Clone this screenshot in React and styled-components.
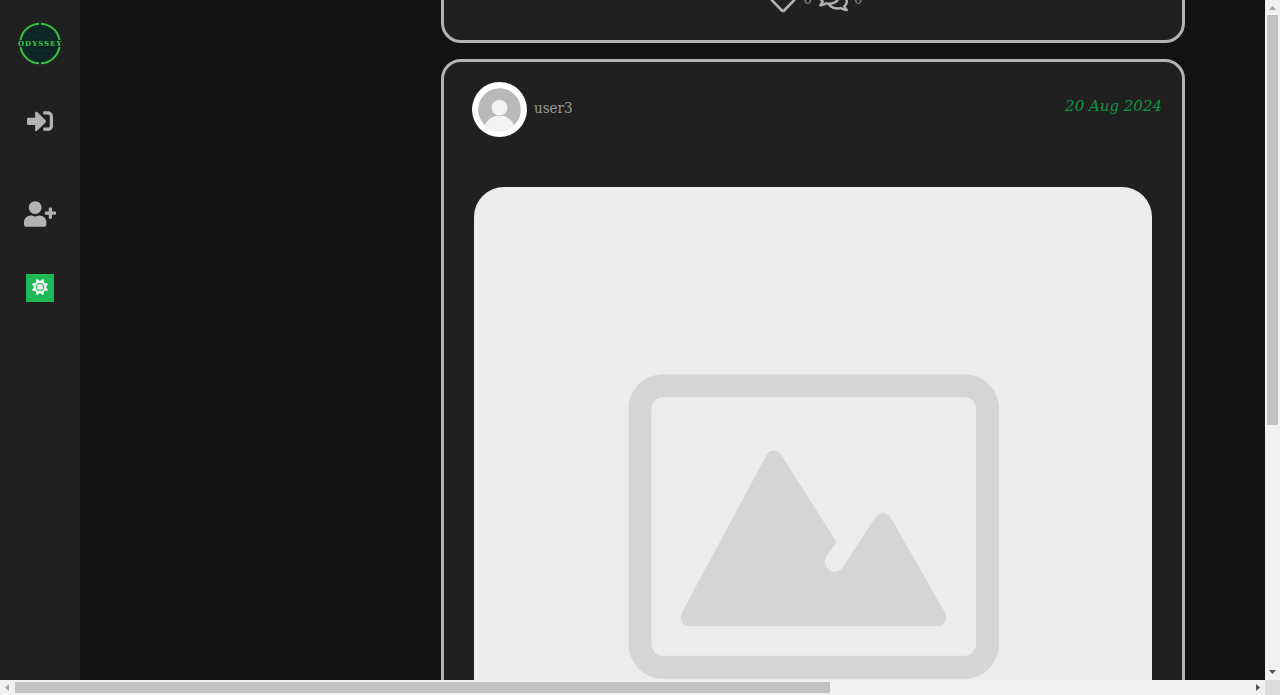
import React from "react";
import styled, { createGlobalStyle } from "styled-components";
import {
  FaSignInAlt,
  FaUserPlus,
  FaRegHeart,
  FaRegComments,
} from "react-icons/fa";
import { FaSun } from "react-icons/fa6";

const GlobalStyle = createGlobalStyle`
  * { box-sizing: border-box; }
  body {
    margin: 0;
    background: #121212;
    color: #b3b3b3;
    font-family: "DejaVu Serif Condensed", "DejaVu Serif", serif;
    font-size: 15px;
    line-height: 20px;
  }
`;

const Window = styled.div`
  display: grid;
  grid-template: minmax(0, 1fr) 15px / minmax(0, 1fr) 15px;
  height: 100vh;
`;

const Page = styled.div`
  display: flex;
  overflow: hidden;
`;

const Sidebar = styled.nav`
  flex: 0 0 80px;
  display: flex;
  flex-direction: column;
  align-items: center;
  padding-top: 20px;
  background: #202020;
`;

const HomeLink = styled.a`
  display: block;
  height: 47px;
  margin-bottom: 7px;
`;

const NavLink = styled.a`
  display: flex;
  align-items: center;
  justify-content: center;
  width: 100%;
  height: 93px;
  color: #b3b3b3;

  svg {
    width: 32px;
    height: 26px;
  }
`;

const ThemeToggle = styled.button`
  display: flex;
  justify-content: center;
  width: 28px;
  height: 28px;
  margin-top: 14px;
  padding: 5px 0 0;
  border: 0;
  background: #1db954;
  color: #f1f1f1;
  font-size: 16px;
`;

const Feed = styled.main`
  flex: 1;
  display: flex;
  flex-direction: column;
  align-items: flex-end;
  gap: 16px;
  margin-top: -63px;
  padding: 0 80px 16px 16px;
`;

const Card = styled.article`
  flex: none;
  width: 100%;
  max-width: 744px;
  border: 3px solid #b3b3b3;
  border-radius: 20px;
  background: #202020;
`;

const Actions = styled.div`
  display: flex;
  align-items: center;
  justify-content: center;
  gap: 7px;
  padding: 46px 0 26px 6px;
`;

const Action = styled.button`
  display: flex;
  align-items: center;
  gap: 6px;
  height: 28px;
  padding: 0;
  border: 0;
  background: none;
  color: #b3b3b3;
  font: inherit;

  svg {
    width: ${(p) => (p.$wide ? "29px" : "28px")};
    height: 28px;
  }
`;

const Count = styled.span`
  padding-bottom: 2px;
  color: #8c8c8c;
`;

const PostHeader = styled.header`
  display: flex;
  align-items: center;
  gap: 7px;
  padding: 20px 20px 50px 28px;
`;

const UserName = styled.a`
  padding-bottom: 4px;
  color: #999;
  text-decoration: none;
`;

const PostDate = styled.time`
  align-self: flex-start;
  margin: 14px 0 0 auto;
  color: #0f9743;
  font-family: "DejaVu Serif", serif;
  font-style: italic;
`;

const Picture = styled.figure`
  margin: 0 30px 30px;
  overflow: hidden;
  border-radius: 30px;
  background: #ececec;

  svg {
    display: block;
    width: 100%;
    height: auto;
  }
`;

const ScrollBar = styled.div`
  display: flex;
  flex-direction: ${(p) => (p.$vertical ? "column" : "row")};
  background: #f1f1f1;
`;

const ScrollArrow = styled.svg`
  flex: none;
  width: 15px;
  height: 15px;
  fill: ${(p) => (p.$active ? "#505050" : "#a3a3a3")};
`;

const ScrollTrack = styled.div`
  flex: 1;
  display: flex;
  flex-direction: ${(p) => (p.$vertical ? "column" : "row")};
  padding: ${(p) => (p.$vertical ? "0 2px" : "2px 0")};
`;

const ScrollThumb = styled.div`
  flex: 0 0 ${(p) => p.$size};
  background: #c1c1c1;
`;

const ScrollCorner = styled.div`
  background: #dcdcdc;
`;

const LogoText = styled.text`
  fill: #3ccb48;
  font-family: "DejaVu Serif", serif;
  font-size: 7px;
  font-weight: bold;
  letter-spacing: 1px;
`;

function Logo() {
  return (
    <svg width="48" height="47" viewBox="0 0 48 47" role="img" aria-label="Odyssey">
      <circle cx="24" cy="23.5" r="19" fill="#0d2525" />
      <path d="M12 18l6-4 4 3 5-5 4 5 5 2M13 29l8 2 7-1 7 2" fill="none" stroke="#122f2a" />
      <g fill="none" stroke="#36bd42" strokeWidth="2">
        <path d="M4.500 20A19.800 19.800 0 0 1 23 3.700M25 3.700A19.800 19.800 0 0 1 43.500 20" />
        <path d="M4.500 27A19.800 19.800 0 0 0 23 43.300M25 43.300A19.800 19.800 0 0 0 43.500 27" />
      </g>
      <LogoText x="2" y="26">ODYSSEY</LogoText>
    </svg>
  );
}

function Avatar() {
  return (
    <svg width="55" height="55" viewBox="0 0 55 55" role="img" aria-label="Profile picture">
      <defs>
        <clipPath id="avatar-disc">
          <circle cx="27.5" cy="27.5" r="21.3" />
        </clipPath>
      </defs>
      <circle cx="27.5" cy="27.5" r="27.5" fill="#fff" />
      <g clipPath="url(#avatar-disc)">
        <rect width="55" height="55" fill="#b9b9b9" />
        <ellipse cx="27.5" cy="47" rx="15" ry="13.5" fill="#f3f3f3" />
        <circle cx="27.5" cy="25.7" r="8.7" fill="#b9b9b9" />
        <circle cx="27.5" cy="25.7" r="7.9" fill="#f3f3f3" />
      </g>
    </svg>
  );
}

function PlaceholderImage() {
  return (
    <svg viewBox="0 0 678 678" role="img" aria-label="Placeholder">
      <rect x="166" y="198.7" width="347.5" height="281.6" rx="23" fill="none" stroke="#d5d5d5" strokeWidth="23" />
      <path
        fill="#d5d5d5"
        d="M292 269C295 261.500 304.500 261.500 308 269L361.300 353Q362.500 355 361.300 357L353 368.500C346 378 359 392 368.700 380.500L401 331C405 324.500 413 324.500 417 331L470 424Q472 428 472 431.500Q471 438 465 439H214.500Q208 438.500 207 431.500Q207 428 209 423.500Z"
      />
    </svg>
  );
}

const ARROWS = {
  up: "M4 10h7L7.500 6z",
  down: "M4 5h7L7.500 9z",
  left: "M9 4v7L5 7.500z",
  right: "M6 4v7l4-3.500z",
};

function Arrow({ direction, active }) {
  return (
    <ScrollArrow viewBox="0 0 15 15" $active={active} aria-hidden="true">
      <path d={ARROWS[direction]} />
    </ScrollArrow>
  );
}

export default function App() {
  return (
    <>
      <GlobalStyle />
      <Window>
        <Page>
          <Sidebar>
            <HomeLink href="#home">
              <Logo />
            </HomeLink>
            <NavLink href="#signin" aria-label="Sign in">
              <FaSignInAlt />
            </NavLink>
            <NavLink href="#signup" aria-label="Sign up">
              <FaUserPlus />
            </NavLink>
            <ThemeToggle type="button" aria-label="Toggle theme">
              <FaSun />
            </ThemeToggle>
          </Sidebar>
          <Feed>
            <Card>
              <Actions>
                <Action type="button" aria-label="Likes">
                  <FaRegHeart />
                  <Count>0</Count>
                </Action>
                <Action type="button" aria-label="Comments" $wide>
                  <FaRegComments />
                  <Count>0</Count>
                </Action>
              </Actions>
            </Card>
            <Card>
              <PostHeader>
                <Avatar />
                <UserName href="#user3">user3</UserName>
                <PostDate dateTime="2024-08-20">20 Aug 2024</PostDate>
              </PostHeader>
              <Picture>
                <PlaceholderImage />
              </Picture>
            </Card>
          </Feed>
        </Page>
        <ScrollBar $vertical>
          <Arrow direction="up" />
          <ScrollTrack $vertical>
            <ScrollThumb $size="63%" />
          </ScrollTrack>
          <Arrow direction="down" active />
        </ScrollBar>
        <ScrollBar>
          <Arrow direction="left" />
          <ScrollTrack>
            <ScrollThumb $size="66%" />
          </ScrollTrack>
          <Arrow direction="right" active />
        </ScrollBar>
        <ScrollCorner />
      </Window>
    </>
  );
}
